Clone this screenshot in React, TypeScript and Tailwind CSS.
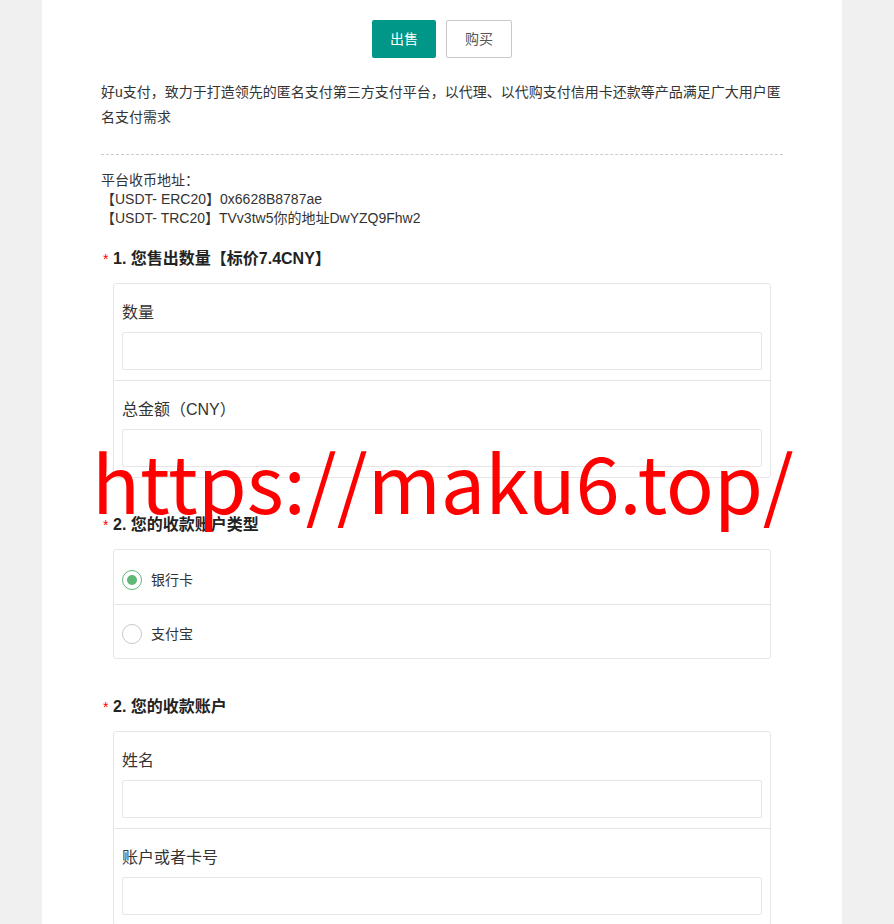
import React from "react";

const Heading = ({ text }: { text: string }) => (
  <div className="h-[24px] whitespace-nowrap text-[16px] font-bold leading-[24px] text-[#222]">
    <span className="inline-block w-[12px] pl-[2px] text-[14px] font-normal text-[#ff0000]">*</span>
    {text}
  </div>
);

const Field = ({ label, first }: { label: string; first?: boolean }) => (
  <div className={`px-2 pt-[17px] pb-[10px] ${first ? "" : "border-t border-[#e6e6e6]"}`}>
    <div className="mb-[7px] text-[16px] leading-[24px] text-[#333]">{label}</div>
    <input className="block h-[38px] w-full rounded-[2px] border border-[#e6e6e6] bg-white outline-none" />
  </div>
);

export default function App() {
  return (
    <div className="relative min-h-[924px] overflow-hidden bg-[#f0f0f0] font-['Liberation_Sans','Noto_Sans_CJK_SC',sans-serif] text-[#333]">
      <div className="ml-[42px] min-h-[924px] w-[800px] bg-white px-[59px] pt-[20px] pb-[40px]">
        <div className="flex justify-center gap-[10px]">
          <button className="h-[38px] rounded-[2px] bg-[#009688] px-[18px] text-[14px] text-white">出售</button>
          <button className="h-[38px] rounded-[2px] border border-[#c9c9c9] bg-white px-[18px] text-[14px] text-[#555]">购买</button>
        </div>
        <p className="mt-[22px] text-[14px] leading-[25px] text-[#333]">
          好u支付，致力于打造领先的匿名支付第三方支付平台，以代理、以代购支付信用卡还款等产品满足广大用户匿名支付需求
        </p>
        <div className="mt-[24px] border-t border-dashed border-[#cccccc]" />
        <div className="pt-[16px] text-[14px] leading-[19px] text-[#333]">
          <div>平台收币地址：</div>
          <div>【USDT- ERC20】0x6628B8787ae</div>
          <div>【USDT- TRC20】TVv3tw5你的地址DwYZQ9Fhw2</div>
        </div>

        <div className="mt-[19px]">
          <Heading text="1. 您售出数量【标价7.4CNY】" />
          <div className="mx-3 mt-[12px] rounded-[3px] border border-[#e6e6e6]">
            <Field label="数量" first />
            <Field label="总金额（CNY）" />
          </div>
        </div>

        <div className="mt-[35px]">
          <Heading text="2. 您的收款账户类型" />
          <div className="mx-3 mt-[12px] rounded-[3px] border border-[#e6e6e6]">
            <div className="flex h-[54px] items-center gap-[9px] px-2 pt-[5px]">
              <span className="flex h-[20px] w-[20px] items-center justify-center rounded-full border-[1.5px] border-[#5fb878]">
                <span className="h-[10px] w-[10px] rounded-full bg-[#5fb878]" />
              </span>
              <span className="text-[14px] leading-[20px] text-[#333]">银行卡</span>
            </div>
            <div className="flex h-[54px] items-center gap-[9px] border-t border-[#e6e6e6] px-2 pt-[5px]">
              <span className="h-[20px] w-[20px] rounded-full border-[1.5px] border-[#c8c8c8]" />
              <span className="text-[14px] leading-[20px] text-[#333]">支付宝</span>
            </div>
          </div>
        </div>

        <div className="mt-[36px]">
          <Heading text="2. 您的收款账户" />
          <div className="mx-3 mt-[12px] rounded-[3px] border border-[#e6e6e6]">
            <Field label="姓名" first />
            <Field label="账户或者卡号" />
          </div>
        </div>
      </div>

      <div className="pointer-events-none absolute left-[92px] top-[440px] whitespace-nowrap font-['Noto_Sans_CJK_SC',sans-serif] text-[79px] leading-none text-[#ff0000]">
        https://maku6.top/
      </div>
    </div>
  );
}
